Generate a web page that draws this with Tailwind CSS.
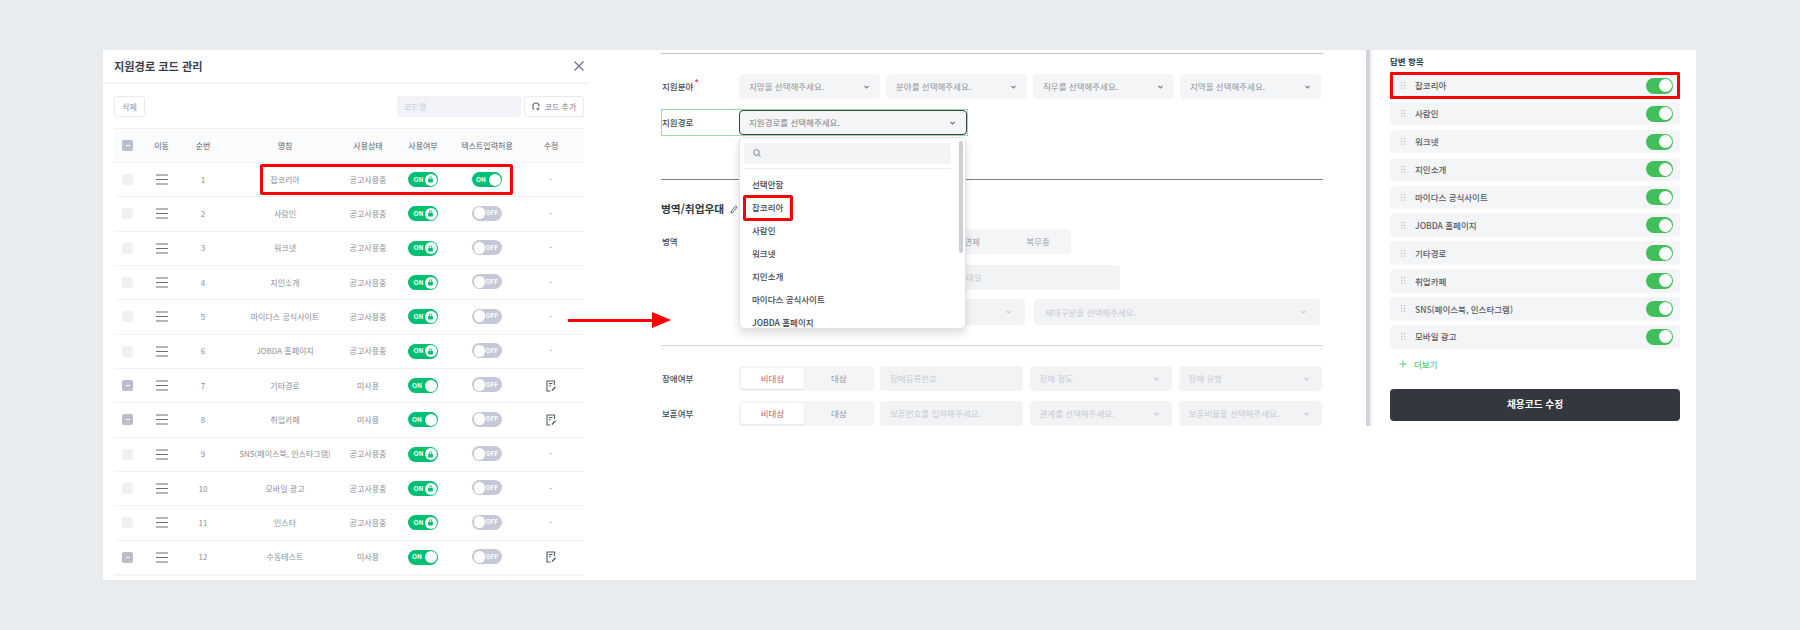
<!DOCTYPE html>
<html lang="ko">

<head>
    <meta charset="UTF-8">
    <title>지원경로 코드 관리</title>
    <script src="https://cdn.jsdelivr.net/npm/@tailwindcss/browser@4"></script>
</head>

<body class="bg-[#e8ecef] w-[1800px] h-[630px] overflow-hidden pt-[50px] pl-[103px] font-['Noto_Sans_CJK_KR',sans-serif]">
    <div class="relative flex w-[1593px] h-[530px] bg-white">

        <!-- code modal -->
        <section class="w-[486px] shrink-0">
            <div class="flex justify-between items-center h-[34px] border-b-2 border-[#f3f4f6] pl-[11px] pr-[5px]">
                <h1 class="text-[11.2px] font-bold text-[#3a3f47]">지원경로 코드 관리</h1>
                <svg width="10" height="10" viewBox="0 0 10 10" fill="none" stroke="#6b7280" stroke-width="1.2"><path d="M.5.5l9 9M9.5.5l-9 9" /></svg>
            </div>
            <div class="flex items-center gap-[3px] mt-[12px] ml-[11px] w-[470px] h-[21px]">
                <button class="w-[31px] h-[21px] border border-[#e9ebef] rounded-[3px] text-[8px] text-[#8d929b] mr-auto">삭제</button>
                <div class="w-[124px] h-[21px] bg-[#f1f3f8] rounded-[3px] pl-[7px] flex items-center text-[8px] text-[#c5c9d2]">코드명</div>
                <button class="w-[60px] h-[21px] border border-[#e9ebef] rounded-[3px] text-[8px] text-[#7f848d] flex items-center justify-center gap-[5px]">
                    <svg width="8" height="9" viewBox="0 0 8 9" fill="none" stroke="#5d636d" stroke-width="1.1"><path d="M1 7V4a3 3 0 0 1 6 0v.5M1 7h1.2M6 5.5v3M4.5 7h3" /></svg>
                    코드 추가
                </button>
            </div>
            <div class="ml-[11px] w-[470px] mt-[11px]">
                <div class="grid grid-cols-[27px_41px_42px_122px_44px_66px_62px_66px] items-center text-center h-[34px] bg-[#fafbfc] border-t border-[#eef0f3] text-[8px] text-[#5b616b]">
                    <span class="flex justify-center"><span class="flex items-center justify-center w-[11px] h-[11px] rounded-[2px] bg-[#b9bdcc]"><span class="w-[4px] h-px bg-white"></span></span></span>
                    <span>이동</span><span>순번</span><span>명칭</span><span class="whitespace-nowrap">사용상태</span><span>사용여부</span><span class="whitespace-nowrap">텍스트입력허용</span><span>수정</span>
                </div>
                <div id="codeRows"></div>
            </div>
        </section>

        <!-- form -->
        <section class="w-[662px] ml-[72px] shrink-0">
            <div class="h-px mt-[3px] bg-[#c4c7cc]"></div>

            <div class="flex items-center mt-[20px] h-[25px]">
                <span class="flex items-start w-[78px] pl-px text-[8.5px] font-medium text-[#444a52]">지원분야<span class="ml-px -mt-[2px] text-[#f04452] text-[10px] leading-none">*</span></span>
                <div class="flex gap-[6px]">
                    <div class="flex items-center justify-between w-[141px] h-[25px] bg-[#f4f5f7] rounded-[4px] pl-[10px] pr-[11px] text-[8.5px] text-[#8f949c]">지망을 선택해주세요.<svg width="5" height="4" viewBox="0 0 5 4" fill="none" stroke="#7b8088" stroke-width="1.1"><path d="M.5 1l2 2 2-2" /></svg></div>
                    <div class="flex items-center justify-between w-[141px] h-[25px] bg-[#f4f5f7] rounded-[4px] pl-[10px] pr-[11px] text-[8.5px] text-[#8f949c]">분야를 선택해주세요.<svg width="5" height="4" viewBox="0 0 5 4" fill="none" stroke="#7b8088" stroke-width="1.1"><path d="M.5 1l2 2 2-2" /></svg></div>
                    <div class="flex items-center justify-between w-[141px] h-[25px] bg-[#f4f5f7] rounded-[4px] pl-[10px] pr-[11px] text-[8.5px] text-[#8f949c]">직무를 선택해주세요.<svg width="5" height="4" viewBox="0 0 5 4" fill="none" stroke="#7b8088" stroke-width="1.1"><path d="M.5 1l2 2 2-2" /></svg></div>
                    <div class="flex items-center justify-between w-[141px] h-[25px] bg-[#f4f5f7] rounded-[4px] pl-[10px] pr-[11px] text-[8.5px] text-[#8f949c]">지역을 선택해주세요.<svg width="5" height="4" viewBox="0 0 5 4" fill="none" stroke="#7b8088" stroke-width="1.1"><path d="M.5 1l2 2 2-2" /></svg></div>
                </div>
            </div>

            <div class="relative flex items-center mt-[10px] w-[307px] h-[27px] border border-[#9bdcab]">
                <span class="w-[77px] text-[8.5px] font-medium text-[#444a52]">지원경로</span>
                <div class="flex items-center justify-between w-[228px] h-[25px] bg-[#f4f5f7] border-[1.5px] border-[#3a4048] rounded-[4px] pl-[9px] pr-[11px] text-[8.5px] text-[#7c8189]">지원경로를 선택해주세요.<svg width="5" height="4" viewBox="0 0 5 4" fill="none" stroke="#6b7280" stroke-width="1.1"><path d="M.5 1l2 2 2-2" /></svg></div>

                <!-- open dropdown -->
                <div class="absolute left-[77px] top-[27px] z-10 w-[227px] h-[192px] bg-white border border-[#dfe2e7] rounded-[5px] shadow-[0_4px_10px_rgba(0,0,0,0.14)] overflow-hidden">
                    <div class="flex items-center mt-[5px] ml-[4px] w-[207px] h-[21px] bg-[#f3f4f6] rounded-[3px] pl-[9px]">
                        <svg width="8" height="9" viewBox="0 0 8 9" fill="none" stroke="#6b7280" stroke-width="0.9"><circle cx="3.5" cy="3.5" r="2.8" /><path d="M5.6 5.8l2 2.4" /></svg>
                    </div>
                    <div class="ml-[4px] w-[207px] h-px mt-[4px] bg-[#ebedf1]"></div>
                    <ul class="mt-[4px] pl-[12px] text-[8.5px] text-[#3f444c] font-medium">
                        <li class="h-[23px] leading-[23px]">선택안함</li>
                        <li class="h-[23px] leading-[23px]">잡코리아</li>
                        <li class="h-[23px] leading-[23px]">사람인</li>
                        <li class="h-[23px] leading-[23px]">워크넷</li>
                        <li class="h-[23px] leading-[23px]">지인소개</li>
                        <li class="h-[23px] leading-[23px]">마이다스 공식사이트</li>
                        <li class="h-[23px] leading-[23px]">JOBDA 홈페이지</li>
                    </ul>
                    <div class="absolute right-[2px] top-[3px] w-[4px] h-[112px] rounded-full bg-[#ccd0d6]"></div>
                    <div class="absolute left-[3px] top-[57px] w-[50px] h-[26px] border-[3px] border-[#ff0000] rounded-[2px]"></div>
                </div>
            </div>

            <div class="h-px mt-[43px] bg-[#7c7f85]"></div>

            <div class="flex items-center gap-[6px] mt-[21px] h-[16px] text-[10.7px] font-bold text-[#30353c]">병역/취업우대
                <svg width="8" height="9" viewBox="0 0 8 9" fill="none" stroke="#555b64" stroke-width="0.9"><path d="M1 8l.4-2L5.6 1l1.5 1.2L3 7.2z" /></svg>
            </div>

            <div class="flex items-center mt-[12px] h-[25px]">
                <span class="w-[78px] pl-px text-[8.5px] font-medium text-[#444a52]">병역</span>
                <div class="flex items-center w-[332px] h-[25px] pl-[2px] bg-[#f4f5f7] rounded-[4px] text-[8.5px] text-[#9a9fa7] text-center">
                    <span class="w-[66px]">비대상</span><span class="w-[66px]">군필</span><span class="w-[66px]">미필</span><span class="w-[66px]">면제</span><span class="w-[66px]">복무중</span>
                </div>
            </div>
            <div class="flex items-center mt-[11px] ml-[78px] w-[381px] h-[25px] pl-[219px] bg-[#f2f3f5] rounded-[4px] text-[8.5px] text-[#c6cad1]">제대일</div>
            <div class="flex gap-[9px] mt-[9px] ml-[78px] h-[26px]">
                <div class="flex items-center justify-end w-[286px] bg-[#f2f3f5] rounded-[4px] pr-[14px]"><svg width="5" height="4" viewBox="0 0 5 4" fill="none" stroke="#c6cad1" stroke-width="1.1"><path d="M.5 1l2 2 2-2" /></svg></div>
                <div class="flex items-center justify-between w-[286px] bg-[#f2f3f5] rounded-[4px] pl-[11px] pr-[14px] text-[8.5px] text-[#c6cad1]">제대구분을 선택해주세요.<svg width="5" height="4" viewBox="0 0 5 4" fill="none" stroke="#c6cad1" stroke-width="1.1"><path d="M.5 1l2 2 2-2" /></svg></div>
            </div>

            <div class="h-px mt-[20px] bg-[#d0d3da]"></div>

            <div class="flex items-center mt-[20px] h-[25px]">
                <span class="w-[78px] pl-px text-[8.5px] font-medium text-[#444a52]">장애여부</span>
                <div class="flex gap-[6.5px] text-[8.5px] text-[#c6cad1]">
                    <div class="flex items-center w-[134.5px] h-[25px] p-[2px] bg-[#f4f5f7] rounded-[4px] text-center">
                        <span class="w-[63px] h-[21px] leading-[21px] bg-white rounded-[3px] shadow-[0_1px_2px_rgba(0,0,0,0.08)] text-[#c0616a]">비대상</span><span class="flex-1 text-[#8f949c] pl-[2px]">대상</span>
                    </div>
                    <div class="flex items-center w-[143px] h-[25px] bg-[#f2f3f5] rounded-[4px] pl-[10px]">장애등록번호</div>
                    <div class="flex items-center justify-between w-[142.5px] h-[25px] bg-[#f2f3f5] rounded-[4px] pl-[10px] pr-[13px]">장애 정도<svg width="5" height="4" viewBox="0 0 5 4" fill="none" stroke="#c6cad1" stroke-width="1.1"><path d="M.5 1l2 2 2-2" /></svg></div>
                    <div class="flex items-center justify-between w-[143px] h-[25px] bg-[#f2f3f5] rounded-[4px] pl-[10px] pr-[13px]">장애 유형<svg width="5" height="4" viewBox="0 0 5 4" fill="none" stroke="#c6cad1" stroke-width="1.1"><path d="M.5 1l2 2 2-2" /></svg></div>
                </div>
            </div>
            <div class="flex items-center mt-[10px] h-[25px]">
                <span class="w-[78px] pl-px text-[8.5px] font-medium text-[#444a52]">보훈여부</span>
                <div class="flex gap-[6.5px] text-[8.5px] text-[#c6cad1]">
                    <div class="flex items-center w-[134.5px] h-[25px] p-[2px] bg-[#f4f5f7] rounded-[4px] text-center">
                        <span class="w-[63px] h-[21px] leading-[21px] bg-white rounded-[3px] shadow-[0_1px_2px_rgba(0,0,0,0.08)] text-[#c0616a]">비대상</span><span class="flex-1 text-[#8f949c] pl-[2px]">대상</span>
                    </div>
                    <div class="flex items-center w-[143px] h-[25px] bg-[#f2f3f5] rounded-[4px] pl-[10px]">보훈번호를 입력해주세요.</div>
                    <div class="flex items-center justify-between w-[142.5px] h-[25px] bg-[#f2f3f5] rounded-[4px] pl-[10px] pr-[13px]">관계를 선택해주세요.<svg width="5" height="4" viewBox="0 0 5 4" fill="none" stroke="#c6cad1" stroke-width="1.1"><path d="M.5 1l2 2 2-2" /></svg></div>
                    <div class="flex items-center justify-between w-[143px] h-[25px] bg-[#f2f3f5] rounded-[4px] pl-[10px] pr-[13px]">보훈비율을 선택해주세요.<svg width="5" height="4" viewBox="0 0 5 4" fill="none" stroke="#c6cad1" stroke-width="1.1"><path d="M.5 1l2 2 2-2" /></svg></div>
                </div>
            </div>
        </section>

        <div class="w-[7px] h-[376px] ml-[43px] bg-[#d1d5db] border-r-[3px] border-[#f3f4f6] shrink-0"></div>

        <!-- answer items -->
        <section class="w-[290px] ml-[17px] shrink-0">
            <h2 class="h-[24px] leading-[22px] text-[8.5px] font-bold text-[#3a3f47]">답변 항목</h2>
            <div id="answerRows"></div>
            <div class="flex items-center h-[15px] mt-[8px] pl-[9px] gap-[7px] text-[8.5px] font-medium text-[#5ccb75]">
                <svg width="8" height="8" viewBox="0 0 8 8" fill="none" stroke="#5ccb75" stroke-width="1"><path d="M4 .5v7M.5 4h7" /></svg>
                더보기
            </div>
            <button class="w-[290px] h-[32px] mt-[17px] bg-[#33373e] rounded-[4px] text-[9.7px] font-bold text-white">채용코드 수정</button>
        </section>

        <!-- annotations -->
        <div class="absolute left-[157px] top-[114px] w-[253px] h-[31px] border-[3px] border-[#ff0000] rounded-[2px]"></div>
        <div class="absolute left-[1287px] top-[22px] w-[290px] h-[27px] border-[3px] border-[#ff0000] rounded-[1px]"></div>
        <div class="absolute left-[465px] top-[269px] w-[86px] h-[3px] bg-[#ff0000]"></div>
        <svg class="absolute left-[549px] top-[262px]" width="19" height="16" viewBox="0 0 19 16"><path d="M0 0l19 8L0 16z" fill="#ff0000" /></svg>
    </div>

    <script>
        const lock = '<svg width="7" height="7" viewBox="0 0 7 7" fill="none"><path d="M2.2 3.2V2.1a1.3 1.3 0 0 1 2.6 0v1.1" stroke="#00bf72" stroke-width="0.9" /><rect x="1.1" y="3" width="4.8" height="3.4" rx="0.6" fill="#00bf72" /></svg>';

        function toggle(on, locked) {
            if (on) {
                return `<span class="inline-flex items-center justify-between w-[30px] h-[15px] ${locked ? 'pl-[5.5px]' : 'pl-[4px]'} pr-[1.5px] rounded-full bg-[#00bf72] text-[6.5px] font-bold text-white">ON<span class="flex items-center justify-center w-[12px] h-[12px] rounded-full bg-white">${locked ? lock : ''}</span></span>`;
            }
            return '<span class="inline-flex items-center justify-between w-[30px] h-[15px] pl-[1.5px] pr-[4px] rounded-full bg-[#c5c8d8] text-[6.5px] font-bold text-white"><span class="w-[12px] h-[12px] rounded-full bg-white"></span>OFF</span>';
        }

        const codes = [
            ['잡코리아', 1], ['사람인', 1], ['워크넷', 1], ['지인소개', 1], ['마이다스 공식사이트', 1], ['JOBDA 홈페이지', 1],
            ['기타경로', 0], ['취업카페', 0], ['SNS(페이스북, 인스타그램)', 1], ['모바일 광고', 1], ['인스타', 1], ['수동테스트', 0],
        ];
        const editIcon = '<svg class="mx-auto" width="11" height="12" viewBox="0 0 11 12" fill="none" stroke="#555b64" stroke-width="1.1"><path d="M8.5 5V1H1v10h3.5M3 3.5h3.5M3 5.8h2" /><path d="M6 10.5l3.5-3.8" stroke-width="1.3" /></svg>';
        const menuIcon = '<svg class="mx-auto" width="12" height="11" viewBox="0 0 12 11" fill="none" stroke="#69707b" stroke-width="1.2"><path d="M0 1h12M0 5.5h12M0 10h12" /></svg>';

        document.getElementById('codeRows').innerHTML = codes.map(([name, inUse], i) => `
            <div class="grid grid-cols-[27px_41px_42px_122px_44px_66px_62px_66px] items-center text-center h-[34.33px] border-t border-[#f0f1f4] text-[8px] text-[#8b8f99]">
                <span class="flex justify-center"><span class="flex items-center justify-center w-[11px] h-[11px] rounded-[2px] ${inUse ? 'bg-[#eff0f2]' : 'bg-[#b9bdcc]'}">${inUse ? '' : '<span class="w-[4px] h-px bg-white"></span>'}</span></span>
                <span>${menuIcon}</span>
                <span>${i + 1}</span>
                <span class="whitespace-nowrap">${name}</span>
                <span class="whitespace-nowrap">${inUse ? '공고사용중' : '미사용'}</span>
                <span>${toggle(true, inUse)}</span>
                <span>${toggle(i === 0, false)}</span>
                <span>${inUse ? '-' : editIcon}</span>
            </div>`).join('') + '<div class="border-t-2 border-[#f3f4f6]"></div>';

        const answers = ['잡코리아', '사람인', '워크넷', '지인소개', '마이다스 공식사이트', 'JOBDA 홈페이지', '기타경로', '취업카페', 'SNS(페이스북, 인스타그램)', '모바일 광고'];
        const grip = '<svg width="5" height="7" viewBox="0 0 5 7" fill="#b4b8bf"><rect width="1.2" height="1.2" /><rect x="3" width="1.2" height="1.2" /><rect y="2.8" width="1.2" height="1.2" /><rect x="3" y="2.8" width="1.2" height="1.2" /><rect y="5.6" width="1.2" height="1.2" /><rect x="3" y="5.6" width="1.2" height="1.2" /></svg>';

        document.getElementById('answerRows').innerHTML = answers.map(name => `
            <div class="flex items-center h-[23.5px] mb-[4.4px] bg-[#f4f5f7] rounded-[4px] pl-[11px] pr-[7px] text-[8.5px] font-medium text-[#555b64]">
                ${grip}
                <span class="ml-[9px] mr-auto">${name}</span>
                <span class="flex items-center justify-end w-[27px] h-[16px] pr-[1.5px] rounded-full bg-[#40bf5a]"><span class="w-[13px] h-[13px] rounded-full bg-white"></span></span>
            </div>`).join('');
    </script>
</body>

</html>
